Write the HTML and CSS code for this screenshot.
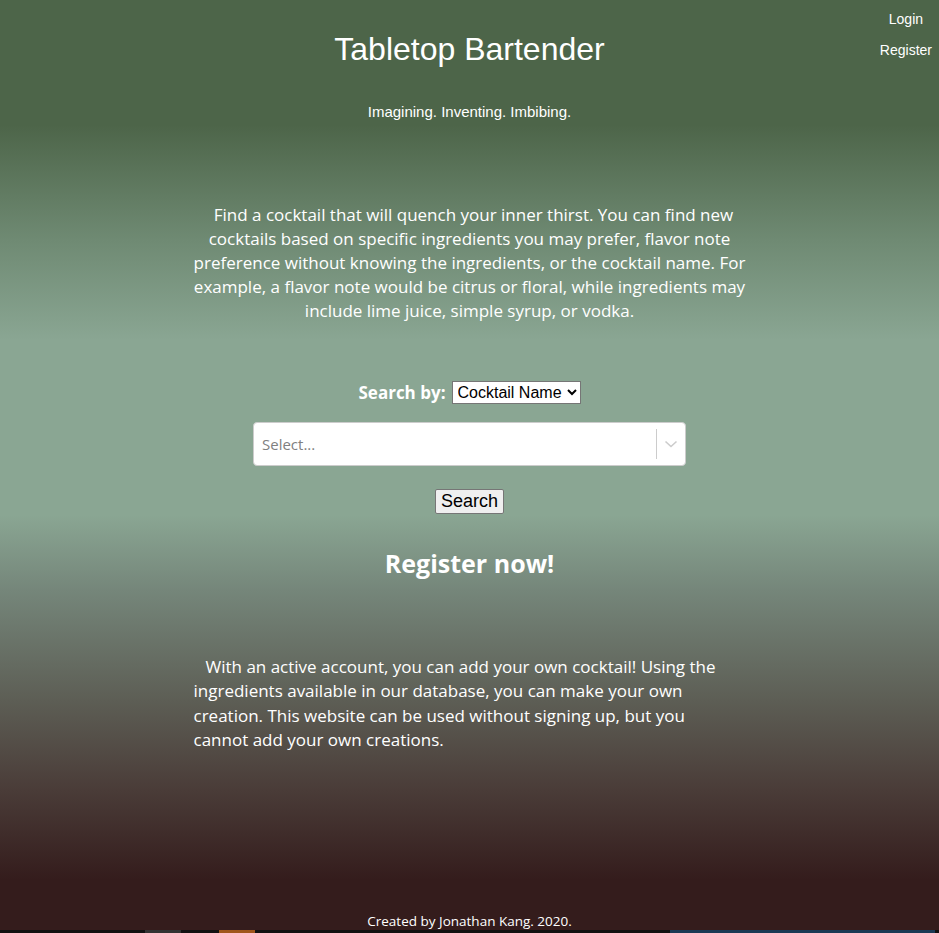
FILE: index.html
```html
<!DOCTYPE html>
<html>
<head>
<meta charset="utf-8">
<title>Tabletop Bartender</title>
<link rel="stylesheet" href="styles.css">
</head>
<body>
<div class="page">
  <nav class="auth">
    <a class="auth-link" href="#">Login</a>
    <a class="auth-link" href="#">Register</a>
  </nav>
  <header class="header">
    <h1 class="title">Tabletop Bartender</h1>
    <p class="tagline">Imagining. Inventing. Imbibing.</p>
  </header>
  <main class="main">
    <p class="intro">Find a cocktail that will quench your inner thirst. You can find new cocktails based on specific ingredients you may prefer, flavor note preference without knowing the ingredients, or the cocktail name. For example, a flavor note would be citrus or floral, while ingredients may include lime juice, simple syrup, or vodka.</p>
    <div class="search-by">
      <label class="search-label">Search by:</label>
      <select class="search-select">
        <option>Cocktail Name</option>
      </select>
    </div>
    <div class="rselect">
      <div class="rselect-value">Select...</div>
      <div class="rselect-sep"></div>
      <div class="rselect-ind">
        <svg width="20" height="20" viewBox="0 0 20 20"><path d="M4.5 7.5 L10 12.5 L15.5 7.5" fill="none" stroke="#ccc" stroke-width="1.6"/></svg>
      </div>
    </div>
    <button class="search-btn">Search</button>
    <h2 class="register">Register now!</h2>
    <p class="account">With an active account, you can add your own cocktail! Using the ingredients available in our database, you can make your own creation. This website can be used without signing up, but you cannot add your own creations.</p>
  </main>
  <footer class="footer">Created by Jonathan Kang. 2020.</footer>
  <div class="strip">
    <span class="strip-a"></span><span class="strip-b"></span><span class="strip-c"></span>
  </div>
</div>
</body>
</html>
```
FILE: styles.css
```css
html, body {
  margin: 0;
  padding: 0;
}
body {
  width: 939px;
  height: 933px;
  overflow: hidden;
  color: #fff;
  font-family: "Open Sans", "Noto Sans", sans-serif;
}
.page {
  position: relative;
  height: 933px;
  display: flex;
  flex-direction: column;
  background: linear-gradient(to bottom,
    #4d6549 0px,
    #4d6549 125px,
    #6f8a73 240px,
    #8aa693 340px,
    #8aa693 515px,
    #75867a 590px,
    #5d5e55 700px,
    #4a3c38 790px,
    #341c1c 880px,
    #341c1c 933px);
}
.auth {
  position: absolute;
  top: 10px;
  right: 7px;
  display: flex;
  flex-direction: column;
  align-items: center;
  gap: 12px;
  font-family: "Liberation Sans", Arial, sans-serif;
  font-size: 14px;
  line-height: 19px;
}
.auth-link {
  color: #fff;
  text-decoration: none;
}
.header {
  text-align: center;
  font-family: "Liberation Sans", Arial, sans-serif;
}
.title {
  margin: 31px 0 0;
  font-size: 32px;
  font-weight: normal;
  line-height: 37px;
}
.tagline {
  margin: 35px 0 0;
  font-size: 15px;
  line-height: 18px;
}
.main {
  display: flex;
  flex-direction: column;
  align-items: center;
}
.intro {
  width: 560px;
  margin: 82px 0 0;
  text-align: center;
  text-indent: 8px;
  font-size: 17px;
  line-height: 24px;
}
.search-by {
  margin-top: 58px;
  display: flex;
  align-items: center;
  gap: 6px;
}
.search-label {
  font-weight: bold;
  font-size: 17px;
}
.search-select {
  font-family: "Liberation Sans", Arial, sans-serif;
  font-size: 16px;
  height: 23px;
  padding: 0 1px;
  border: 1px solid #767676;
  border-radius: 0;
  background: #fff;
  color: #000;
}
.rselect {
  margin-top: 18px;
  width: 431px;
  height: 42px;
  background: #fff;
  border: 1px solid #ccc;
  border-radius: 4px;
  display: flex;
  align-items: center;
}
.rselect-value {
  flex: 1;
  padding-left: 8px;
  color: #808080;
  font-size: 15px;
}
.rselect-sep {
  width: 1px;
  height: 30px;
  background: #ccc;
}
.rselect-ind {
  width: 28px;
  display: flex;
  justify-content: center;
  align-items: center;
}
.search-btn {
  margin-top: 23px;
  font-family: "Liberation Sans", Arial, sans-serif;
  font-size: 18px;
  line-height: 21px;
  padding: 1px 5px;
  background: #efefef;
  border: 1px solid #767676;
  border-radius: 2px;
  color: #000;
}
.register {
  margin: 33px 0 0;
  font-size: 25px;
  font-weight: bold;
  line-height: 32px;
}
.account {
  width: 536px;
  margin: 76px 0 0;
  padding-right: 16px;
  text-align: left;
  text-indent: 12px;
  font-size: 17px;
  line-height: 24.3px;
}
.footer {
  margin-top: auto;
  text-align: center;
  font-size: 13.5px;
  line-height: 14px;
  padding-bottom: 2px;
}
.strip {
  height: 3px;
  background: #121212;
  display: flex;
}
.strip-a {
  margin-left: 145px;
  width: 36px;
  background: #333;
}
.strip-b {
  margin-left: 38px;
  width: 36px;
  background: #a0561c;
}
.strip-c {
  margin-left: 415px;
  width: 265px;
  background: #1b3a55;
}
```
